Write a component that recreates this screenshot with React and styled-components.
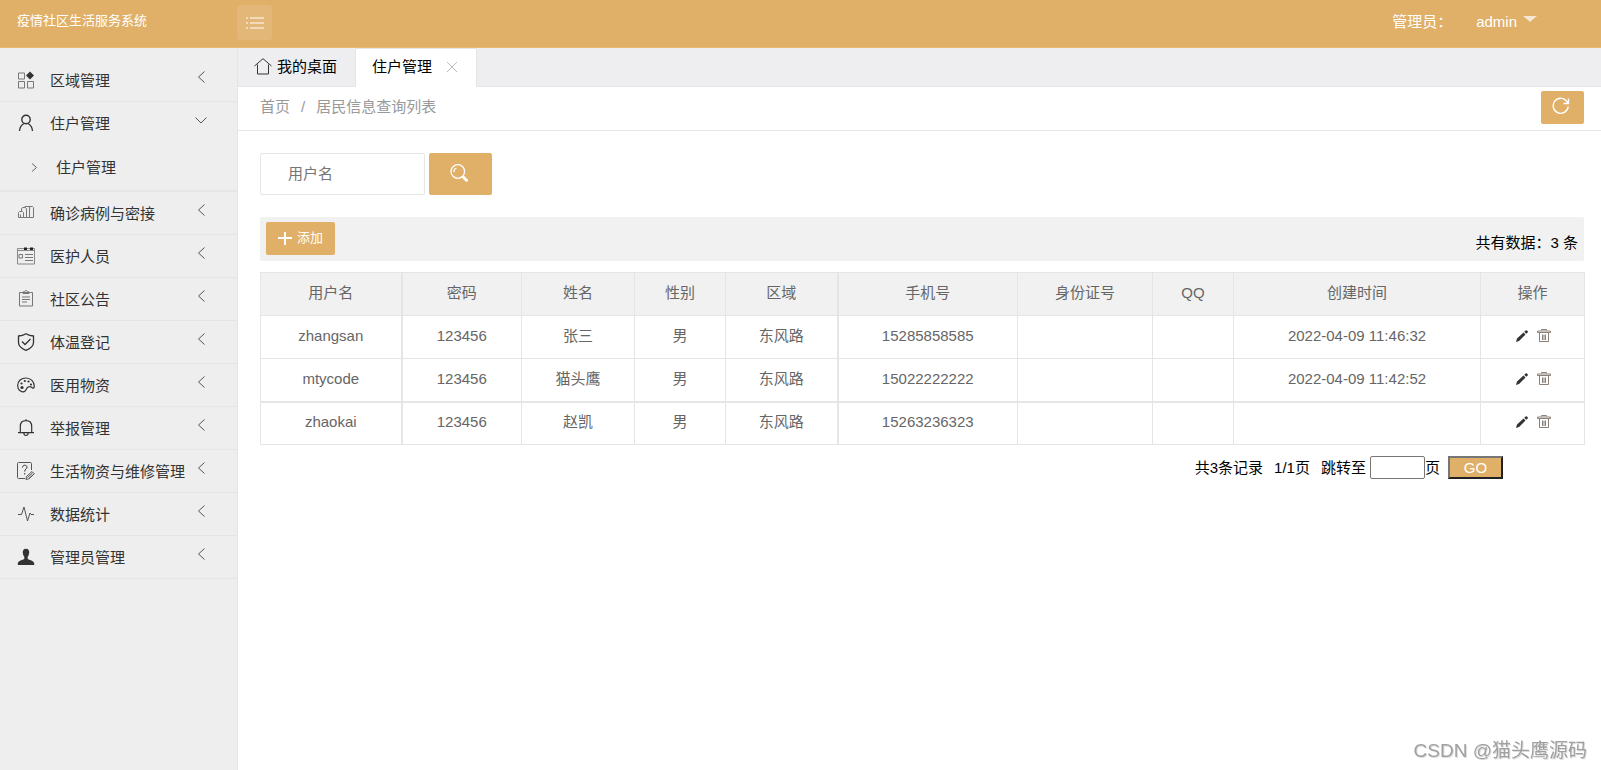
import React, { useState } from "react";
import styled, { createGlobalStyle, css } from "styled-components";

const GOLD = "#e0af68";
const LINE = "#e5e5e5";

const GlobalStyle = createGlobalStyle`
  * {
    box-sizing: border-box;
  }
  body {
    margin: 0;
    background: #fff;
  }
  body, button, input {
    font-family: "Liberation Sans", "Noto Sans CJK SC", sans-serif;
    font-size: 15px;
    line-height: 20px;
  }
  a {
    color: inherit;
    text-decoration: none;
  }
  svg {
    display: block;
    flex: none;
  }
`;

const Page = styled.div`
  display: flex;
  flex-direction: column;
  min-height: 100vh;
`;

const Header = styled.header`
  display: flex;
  height: 48px;
  padding-right: 64px;
  background: ${GOLD};
  border-bottom: 1px solid #e5b876;
  color: #fff;
`;

const Brand = styled.a`
  width: 237px;
  padding: 11px 0 0 17px;
  font-size: 13px;
`;

const MenuToggle = styled.button`
  display: flex;
  align-items: center;
  justify-content: center;
  width: 35px;
  height: 35px;
  margin-top: 5px;
  padding: 0;
  border: 0;
  border-radius: 3px;
  background: rgba(255, 255, 255, 0.1);
  color: #fff;
`;

const Account = styled.div`
  display: flex;
  gap: 24px;
  margin-left: auto;
  padding-top: 12px;
`;

const AccountLink = styled.a`
  display: flex;
  gap: 6px;
`;

const Caret = styled.i`
  height: 6px;
  margin-top: 4px;
  border: 7px solid transparent;
  border-top: 6px solid rgba(255, 255, 255, 0.7);
  border-bottom: 0;
`;

const Body = styled.div`
  display: flex;
  flex: 1;
`;

const Sidebar = styled.nav`
  flex: none;
  width: 238px;
  padding-top: 11px;
  background: #eee;
  border-right: 1px solid ${LINE};
  color: #333;
`;

const MenuItem = styled.a`
  display: flex;
  align-items: center;
  height: 43px;
  padding: 0 29px 0 17px;
  border-bottom: 1px solid ${(props) => (props.$open ? "transparent" : LINE)};
  white-space: nowrap;
`;

const MenuText = styled.span`
  flex: 1;
  margin-left: 15px;
  padding-top: 2px;
`;

const ArrowBox = styled.span`
  margin-bottom: 6px;
  color: #555;
`;

const SubMenu = styled.div`
  border-bottom: 2px solid ${LINE};
`;

const SubItem = styled.a`
  display: flex;
  align-items: center;
  gap: 17px;
  height: 45px;
  padding-left: 30px;
`;

const Main = styled.main`
  flex: 1;
  min-width: 0;
`;

const Tabs = styled.div`
  display: flex;
  height: 39px;
  background: #eeeef0;
  border-bottom: 1px solid ${LINE};
`;

const Tab = styled.a`
  display: flex;
  align-items: center;
  gap: 5px;
  height: 38px;
  padding: 0 18px 0 16px;
  color: #000;
  ${(props) =>
    props.$active &&
    css`
      height: 39px;
      gap: 14px;
      padding: 0 18px 2px 16px;
      border: 1px solid ${LINE};
      border-width: 1px 1px 0 1px;
      border-radius: 2px 2px 0 0;
      background: #fff;
    `}
`;

const Crumbs = styled.div`
  display: flex;
  align-items: center;
  gap: 11px;
  height: 44px;
  padding: 0 17px 3px 22px;
  border-bottom: 1px solid ${LINE};
  color: #999;
`;

const GoldButton = styled.button`
  display: flex;
  align-items: center;
  justify-content: center;
  gap: 5px;
  width: ${(props) => props.$width};
  height: ${(props) => props.$height || "33px"};
  padding: 0 3px 3px 0;
  border: 0;
  border-radius: 2px;
  background: ${GOLD};
  color: #fff;
  font-size: 13px;
`;

const RefreshButton = styled(GoldButton)`
  margin-left: auto;
`;

const AddButton = styled(GoldButton)`
  padding: 0 0 1px;
`;

const Content = styled.div`
  padding: 22px 17px 22px 22px;
`;

const SearchForm = styled.form`
  display: flex;
  gap: 4px;
`;

const SearchInput = styled.input`
  width: 165px;
  height: 42px;
  padding: 0 10px 2px 27px;
  border: 1px solid ${LINE};
  border-radius: 2px;
  &::placeholder {
    color: #757575;
  }
`;

const Toolbar = styled.div`
  display: flex;
  justify-content: space-between;
  height: 44px;
  margin: 22px 0 11px;
  padding: 5px 6px;
  border-radius: 2px;
  background: #f1f1f1;
`;

const Total = styled.span`
  padding-top: 11px;
`;

const Table = styled.table`
  width: 100%;
  table-layout: fixed;
  border-collapse: collapse;
  color: #666;
  text-align: center;
`;

const Col = styled.col`
  width: ${(props) => props.$width}px;
`;

const cell = css`
  padding: 0 8px 2px;
  border: 1px solid ${LINE};
  font-weight: 400;
  &:nth-child(2),
  &:nth-child(6) {
    border-left-width: 2px;
  }
`;

const Th = styled.th`
  ${cell}
  height: 43px;
  background: #f1f1f1;
`;

const Td = styled.td`
  ${cell}
  height: 43px;
  tr:last-child > & {
    border-top-width: 2px;
  }
`;

const Actions = styled.div`
  display: flex;
  justify-content: center;
  gap: 8px;
  color: #333;
`;

const Pager = styled.form`
  display: flex;
  align-items: center;
  justify-content: flex-end;
  margin-top: 11px;
  padding-right: 81px;
`;

const PagerText = styled.span`
  margin-right: 11px;
`;

const PageInput = styled.input`
  width: 55px;
  height: 23px;
  margin-left: 4px;
  border: 1px solid #767676;
  border-radius: 2px;
`;

const GoButton = styled.button`
  width: 55px;
  height: 23px;
  margin-left: 8px;
  padding: 0;
  border: 2px solid;
  border-color: #767676 #212121 #212121 #767676;
  background: ${GOLD};
  color: #fff;
  line-height: 19px;
`;

const Watermark = styled.div`
  position: fixed;
  right: 14px;
  bottom: 6px;
  color: #a0a0a0;
  font-size: 19px;
  line-height: 26px;
  text-shadow: 1px 1px 0 #ddd;
`;

const Icon = ({ size = 18, width = 1, children }) => (
  <svg
    width={size}
    height={size}
    viewBox="0 0 18 18"
    fill="none"
    stroke="currentColor"
    strokeWidth={width}
    aria-hidden="true"
  >
    {children}
  </svg>
);

const icons = {
  area: (
    <Icon>
      <path d="M1.500 2h6v6h-6zM1.500 10.500h6v6.500h-6zM10.500 10.500h6v6.500h-6z" stroke="#777" />
      <path d="M13 .5l4 4-4 4-4-4z" fill="#333" stroke="none" />
    </Icon>
  ),
  user: (
    <Icon width={1.400}>
      <circle cx="9" cy="5.500" r="4.200" />
      <path d="M2.500 17c.2-3.500 1.800-6 4.500-7.500M11 9.500c2.700 1.500 4.300 4 4.500 7.500" />
    </Icon>
  ),
  cases: (
    <Icon>
      <path d="M1.500 13.500v-5l1-1h3l1 1v5zM3.500 13.500v-3M4.500 7.500V5l1-1.500h3l1 1.500v8.500h-3M7 3.500L8 2.500h7.500l1 1v10h-7M12.500 2.500v11" stroke="#777" />
    </Icon>
  ),
  staff: (
    <Icon>
      <path d="M.5 1.500h17v15.500H.5zM.5 3.500h17" stroke="#888" />
      <path d="M7 .5h3v2.500H7zM13 .5h3v2.500h-3z" fill="#222" stroke="none" />
      <path d="M2 7.500h3.500v3.500H2zM8 7.500h8M8 10.500h8M8 13.500h8" stroke="#777" />
    </Icon>
  ),
  notice: (
    <Icon>
      <path d="M2.500 2.500h13v13.500h-13z" stroke="#777" />
      <path d="M6 3.500V2l1.500-.5C8 .3 10 .3 10.500 1.500L12 2v1.500zM5 7h8M5 9.500h8M5 12h5" stroke="#777" />
    </Icon>
  ),
  shield: (
    <Icon width={1.300}>
      <path d="M9 .8c2.500 1.500 5 2.100 7.500 2.200v6.500c0 3.500-3 6-7.500 7.800-4.500-1.800-7.500-4.300-7.500-7.800V3C4 2.900 6.500 2.300 9 .8z" />
      <path d="M5 8.500l3 3 5.500-5.500" />
    </Icon>
  ),
  palette: (
    <Icon width={1.200}>
      <path d="M5.500 15.800C2 15 .7 12 .7 9.500.7 5 4.300 2 9 2c4.800 0 8.300 3.500 8.300 8.500 0 1.800-.8 2-2 1.200-2-1.300-4-1.200-5.300.3C9 13.500 8.500 16.500 5.500 15.800z" />
      <g fill="#333" stroke="none">
        <circle cx="5" cy="11.500" r="1.600" />
        <circle cx="4.500" cy="7.500" r="1.100" />
        <circle cx="7.800" cy="5" r="1.100" />
        <circle cx="11.500" cy="5.500" r="1.100" />
        <circle cx="14" cy="8.500" r="1.100" />
      </g>
    </Icon>
  ),
  bell: (
    <Icon width={1.200}>
      <path d="M1 13.700h16M3.300 13.500V7.500C3.300 4 5.500 1.700 9 1.700s5.700 2.300 5.700 5.800v6M9 .3v1.400M6.800 14c.2 3.300 4.200 3.300 4.400 0" />
    </Icon>
  ),
  repair: (
    <Icon>
      <path d="M14.500 8V1.500c0-.6-.4-1-1-1h-12c-.6 0-1 .4-1 1v14c0 .6.4 1 1 1H8" stroke="#555" />
      <path d="M5.500 5.500c0-3 4.500-3 4.500-.3C10 7 7.700 7 7.700 9.500M7.700 11v1.500" />
      <path d="M9 17.500l.5-3 5.500-5 2.300 2.300-5.500 5zM10.500 15.500l5-4.500M12 16.500l4.500-4" stroke="#555" />
    </Icon>
  ),
  stats: (
    <Icon>
      <path d="M1 9.500h3.500L7 2l3.500 14 2.500-8 1 1.500h3" stroke="#555" />
    </Icon>
  ),
  admin: (
    <Icon>
      <path d="M9 .8c2.500 0 3.400 1.700 3.200 4-.2 2-.8 3.200-1.500 4v2c1 1.300 6.500 1.800 6.500 4.700V17H.8v-1.500c0-2.900 5.500-3.400 6.500-4.700v-2c-.7-.8-1.300-2-1.500-4C5.600 2.500 6.500.8 9 .8z" fill="#333" stroke="none" />
    </Icon>
  ),
};

const Arrow = ({ open }) => (
  <svg width="14" height="14" viewBox="0 0 14 14" fill="none" stroke="currentColor" aria-hidden="true">
    <path d={open ? "M1.500 4.500L7 10l5.500-5.500" : "M10.500 1.500L4.500 7l6 5.500"} />
  </svg>
);

const menu = [
  { icon: "area", text: "区域管理" },
  { icon: "user", text: "住户管理", children: ["住户管理"] },
  { icon: "cases", text: "确诊病例与密接" },
  { icon: "staff", text: "医护人员" },
  { icon: "notice", text: "社区公告" },
  { icon: "shield", text: "体温登记" },
  { icon: "palette", text: "医用物资" },
  { icon: "bell", text: "举报管理" },
  { icon: "repair", text: "生活物资与维修管理" },
  { icon: "stats", text: "数据统计" },
  { icon: "admin", text: "管理员管理" },
];

const columns = [
  ["用户名", 141],
  ["密码", 120],
  ["姓名", 113],
  ["性别", 91],
  ["区域", 112],
  ["手机号", 180],
  ["身份证号", 135],
  ["QQ", 81],
  ["创建时间", 247],
  ["操作", 104],
];

const rows = [
  ["zhangsan", "123456", "张三", "男", "东风路", "15285858585", "", "", "2022-04-09 11:46:32"],
  ["mtycode", "123456", "猫头鹰", "男", "东风路", "15022222222", "", "", "2022-04-09 11:42:52"],
  ["zhaokai", "123456", "赵凯", "男", "东风路", "15263236323", "", "", ""],
];

const App = () => {
  const [name, setName] = useState("");
  const [page, setPage] = useState("");

  return (
    <>
      <GlobalStyle />
      <Page>
        <Header>
          <Brand href="#">疫情社区生活服务系统</Brand>
          <MenuToggle type="button" aria-label="菜单">
            <Icon width={1.200}>
              <path d="M0 4h2M4 4h14M0 9h2M4 9h14M0 14h2M4 14h14" />
            </Icon>
          </MenuToggle>
          <Account>
            <span>管理员：</span>
            <AccountLink href="#">
              admin
              <Caret />
            </AccountLink>
          </Account>
        </Header>
        <Body>
          <Sidebar>
            {menu.map(({ icon, text, children }) => (
              <React.Fragment key={icon}>
                <MenuItem href="#" $open={!!children}>
                  {icons[icon]}
                  <MenuText>{text}</MenuText>
                  <ArrowBox>
                    <Arrow open={!!children} />
                  </ArrowBox>
                </MenuItem>
                {children && (
                  <SubMenu>
                    {children.map((child) => (
                      <SubItem href="#" key={child}>
                        <svg width="9" height="9" viewBox="0 0 9 9" fill="none" stroke="#666">
                          <path d="M2 .5l4.500 4L2 8.500" />
                        </svg>
                        {child}
                      </SubItem>
                    ))}
                  </SubMenu>
                )}
              </React.Fragment>
            ))}
          </Sidebar>
          <Main>
            <Tabs>
              <Tab href="#">
                <Icon>
                  <path d="M.5 8L9 .700l8.500 7.300M3.500 6.500v9.500h11V6.500" stroke="#333" />
                </Icon>
                我的桌面
              </Tab>
              <Tab href="#" $active>
                住户管理
                <svg width="12" height="12" viewBox="0 0 12 12" stroke="#bbb">
                  <path d="M1 1l10 10M11 1L1 11" />
                </svg>
              </Tab>
            </Tabs>
            <Crumbs>
              <a href="#">首页</a>
              <span>/</span>
              <a href="#">居民信息查询列表</a>
              <RefreshButton type="button" $width="43px" aria-label="刷新">
                <Icon width={1.400}>
                  <path d="M16.200 9.500A7.500 7.500 0 1 1 14.500 4l1.500 2M16.500 1.500v5h-5" />
                </Icon>
              </RefreshButton>
            </Crumbs>
            <Content>
              <SearchForm onSubmit={(e) => e.preventDefault()}>
                <SearchInput
                  aria-label="用户名"
                  placeholder="用户名"
                  value={name}
                  onChange={(e) => setName(e.target.value)}
                />
                <GoldButton $width="63px" $height="42px" aria-label="搜索">
                  <Icon width={1.300}>
                    <circle cx="7.800" cy="7.500" r="6.800" />
                    <path d="M4 8C3.800 6 4.800 4.500 6.500 4" />
                    <path d="M13.500 13.200l3 3" strokeWidth="3" strokeLinecap="round" />
                  </Icon>
                </GoldButton>
              </SearchForm>
              <Toolbar>
                <AddButton type="button" $width="69px">
                  <svg width="14" height="14" viewBox="0 0 14 14" stroke="#fff" strokeWidth="2">
                    <path d="M7 1v13M0 7h14" />
                  </svg>
                  添加
                </AddButton>
                <Total>共有数据：3 条</Total>
              </Toolbar>
              <Table>
                <colgroup>
                  {columns.map(([title, width]) => (
                    <Col key={title} $width={width} />
                  ))}
                </colgroup>
                <thead>
                  <tr>
                    {columns.map(([title]) => (
                      <Th key={title}>{title}</Th>
                    ))}
                  </tr>
                </thead>
                <tbody>
                  {rows.map((row) => (
                    <tr key={row[0]}>
                      {row.map((value, i) => (
                        <Td key={i}>{value}</Td>
                      ))}
                      <Td>
                        <Actions>
                          <a href="#" aria-label="编辑">
                            <svg width="14" height="14" viewBox="0 0 14 14" fill="#333">
                              <path d="M1 13l1-3.500 6.500-6 2 2L4 12zM9.200 2.800l1.500-1.300c.4-.3.8-.3 1.200 0l.8.800c.3.4.3.8 0 1.200l-1.500 1.300z" />
                            </svg>
                          </a>
                          <a href="#" aria-label="删除">
                            <svg width="14" height="14" viewBox="0 0 14 14" fill="none" stroke="#8a8078">
                              <path d="M4.500 1.500v-1h5v1M.5 2h13v1.500H.5zM2.500 4v8.500h9V4M5.500 5.500v5.500M7 5.500v5.500M8.500 5.500v5.500" />
                            </svg>
                          </a>
                        </Actions>
                      </Td>
                    </tr>
                  ))}
                </tbody>
              </Table>
              <Pager onSubmit={(e) => e.preventDefault()}>
                <PagerText>共3条记录</PagerText>
                <PagerText>1/1页</PagerText>
                <label htmlFor="page">跳转至</label>
                <PageInput id="page" value={page} onChange={(e) => setPage(e.target.value)} />
                <span>页</span>
                <GoButton>GO</GoButton>
              </Pager>
            </Content>
          </Main>
        </Body>
      </Page>
      <Watermark>CSDN @猫头鹰源码</Watermark>
    </>
  );
};

export default App;
